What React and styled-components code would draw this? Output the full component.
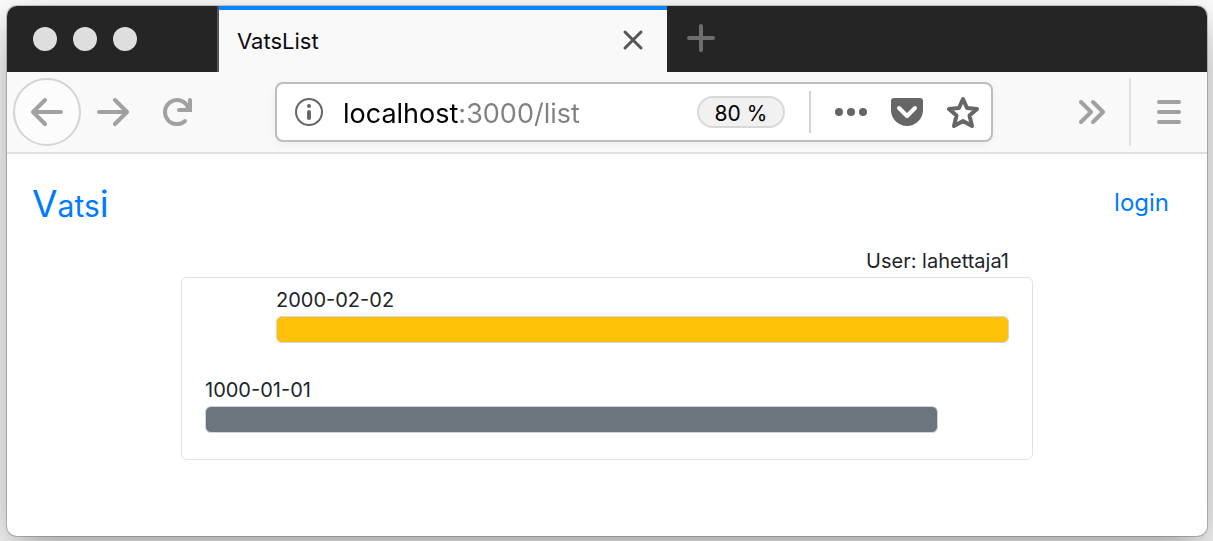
import React, { useState } from "react";
import styled, { createGlobalStyle } from "styled-components";

const GlobalStyle = createGlobalStyle`
  *, *::before, *::after { box-sizing: border-box; }
  body {
    margin: 0;
    background: #fff;
    color: #212529;
    font-family: Inter, "Liberation Sans", sans-serif;
    font-size: 20px;
    line-height: 30px;
  }
  button, input { font: inherit; }
`;

const Desktop = styled.div`
  display: flex;
  min-height: 100vh;
  padding: 6px 6px 5px 7px;
`;

const Window = styled.div`
  flex: 1;
  min-width: 0;
  display: flex;
  flex-direction: column;
  background: #fff;
  border-radius: 10px;
  box-shadow: 0 0 0 1px rgba(0, 0, 0, 0.2), 0 18px 50px rgba(0, 0, 0, 0.38);
`;

const TabBar = styled.div`
  display: flex;
  height: 66px;
  background: #252525;
  border-radius: 10px 10px 0 0;
`;

const WindowControls = styled.div`
  display: flex;
  align-items: center;
  gap: 16px;
  width: 210px;
  padding-left: 26px;
`;

const WindowDot = styled.button`
  width: 24px;
  height: 24px;
  padding: 0;
  border: 0;
  border-radius: 50%;
  background: #dedede;
`;

const Tab = styled.div`
  display: flex;
  align-items: center;
  justify-content: space-between;
  width: 450px;
  padding: 4px 22px 0 18px;
  background: #f9f9f9;
  border-left: 2px solid #555;
  box-shadow: inset 0 4px #0a84ff;
  color: #0c0c0d;
  font-size: 22px;
`;

const IconButton = styled.button`
  display: flex;
  align-items: center;
  justify-content: center;
  flex: none;
  width: ${(p) => p.$width || 32}px;
  height: ${(p) => p.$height || 32}px;
  padding: 0;
  border: 0;
  background: none;
  color: ${(p) => p.$color || "#a1a1a1"};
`;

const NewTab = styled(IconButton)`
  margin: 16px 0 0 18px;
`;

const Toolbar = styled.div`
  display: flex;
  align-items: center;
  height: 82px;
  padding: 0 22px 0 6px;
  background: #f9f9f9;
  border-bottom: 2px solid #e0e0e0;
`;

const NavButtons = styled.div`
  display: flex;
  align-items: center;
  gap: 16px;
  width: 262px;
  flex: none;
`;

const BackButton = styled(IconButton)`
  border: 2px solid #d4d4d4;
  border-radius: 50%;
  background: #fcfcfc;
`;

const UrlBar = styled.div`
  display: flex;
  align-items: center;
  flex: 1;
  min-width: 0;
  height: 60px;
  padding: 0 12px 0 16px;
  background: #fff;
  border: 2px solid #bdbdbd;
  border-radius: 8px;
  box-shadow: 0 2px 8px rgba(0, 0, 0, 0.05);
`;

const UrlInput = styled.input`
  flex: 1;
  min-width: 0;
  height: 40px;
  margin: 0 16px 0 18px;
  padding: 2px 0 0;
  border: 0;
  outline: 0;
  font-size: 27px;
  background: linear-gradient(to right, #000 116px, #808080 116px);
  background-clip: text;
  -webkit-background-clip: text;
  -webkit-text-fill-color: transparent;
`;

const ZoomBadge = styled.button`
  flex: none;
  width: 88px;
  height: 32px;
  padding: 2px 0 0;
  border: 2px solid #d8d8d8;
  border-radius: 16px;
  background: #f1f1f1;
  color: #000;
  font-size: 21px;
  line-height: 28px;
`;

const Divider = styled.span`
  flex: none;
  width: 2px;
  height: ${(p) => p.$height}px;
  margin: ${(p) => p.$margin};
  background: ${(p) => p.$color};
`;

const UrlActions = styled.div`
  display: flex;
  gap: 24px;
`;

const ToolbarEnd = styled.div`
  display: flex;
  align-items: center;
  justify-content: flex-end;
  width: 192px;
  flex: none;
`;

const Page = styled.main`
  padding-bottom: 24px;
`;

const PageHeader = styled.header`
  display: flex;
  align-items: flex-start;
  justify-content: space-between;
  height: 91px;
  padding: 30px 38px 0 25px;
`;

const Brand = styled.a`
  color: #007bff;
  font-size: 37px;
  line-height: 40px;
  text-decoration: none;
`;

const BrandSmall = styled.span`
  font-size: 30px;
`;

const LoginLink = styled.a`
  color: #007bff;
  font-size: 24px;
  line-height: 38px;
  text-decoration: none;
`;

const Content = styled.section`
  width: 71%;
  margin: 0 auto;
`;

const UserLine = styled.p`
  margin: 0;
  padding-right: 24px;
  line-height: 32px;
  text-align: right;
`;

const Board = styled.ul`
  display: flex;
  flex-direction: column;
  gap: 32px;
  margin: 0;
  padding: 7px 23px 26px;
  border: 1px solid #dee2e6;
  border-radius: 6px;
  list-style: none;
`;

const Entry = styled.li`
  margin-left: ${(p) => (p.$side === "right" ? "71px" : "0")};
  margin-right: ${(p) => (p.$side === "left" ? "71px" : "0")};
`;

const Stamp = styled.time`
  display: block;
  margin-bottom: 1px;
`;

const Bar = styled.div`
  height: 27px;
  background: ${(p) => p.$color};
  border: 1px solid #ced4da;
  border-radius: 6px;
`;

const stroke = {
  fill: "none",
  stroke: "currentColor",
  strokeWidth: 4,
  strokeLinecap: "round",
  strokeLinejoin: "round",
};

const entries = [
  { date: "2000-02-02", color: "#ffc107", side: "right" },
  { date: "1000-01-01", color: "#6c757d", side: "left" },
];

export default function App() {
  const [url, setUrl] = useState("localhost:3000/list");
  return (
    <>
      <GlobalStyle />
      <Desktop>
        <Window>
          <TabBar>
            <WindowControls>
              <WindowDot aria-label="Close window" />
              <WindowDot aria-label="Minimize window" />
              <WindowDot aria-label="Zoom window" />
            </WindowControls>
            <Tab>
              <span>VatsList</span>
              <IconButton $width={24} $height={24} $color="#555" aria-label="Close tab">
                <svg width="24" height="24" {...stroke} strokeWidth="3">
                  <path d="M4 3 20 19M20 3 4 19" />
                </svg>
              </IconButton>
            </Tab>
            <NewTab $color="#6e6e6e" aria-label="New tab">
              <svg width="32" height="32" {...stroke}>
                <path d="M16 4V28M4 16H28" />
              </svg>
            </NewTab>
          </TabBar>

          <Toolbar>
            <NavButtons>
              <BackButton $width={68} $height={68} aria-label="Back">
                <svg width="32" height="32" {...stroke}>
                  <path d="M30 16H2M14 4 2 16 14 28" />
                </svg>
              </BackButton>
              <IconButton aria-label="Forward">
                <svg width="32" height="32" {...stroke}>
                  <path d="M2 16H30M18 4 30 16 18 28" />
                </svg>
              </IconButton>
              <IconButton $width={64} aria-label="Reload">
                <svg width="32" height="32" {...stroke}>
                  <path d="M24 25A12 12 0 1 1 26 9.500" />
                  <path d="M29 4V14H18" strokeLinejoin="miter" />
                  <path d="M29 7V14H22Z" fill="currentColor" stroke="none" />
                </svg>
              </IconButton>
            </NavButtons>

            <UrlBar>
              <IconButton $color="#666" aria-label="Site information">
                <svg width="32" height="32" viewBox="0 0 32 32">
                  <circle cx="16" cy="16" r="13" fill="none" stroke="currentColor" strokeWidth="2" />
                  <circle cx="16" cy="10" r="2" fill="currentColor" />
                  <path d="M16 16V22" stroke="currentColor" strokeWidth="4" strokeLinecap="round" />
                </svg>
              </IconButton>
              <UrlInput
                aria-label="Address"
                value={url}
                onChange={(e) => setUrl(e.target.value)}
              />
              <ZoomBadge>80 %</ZoomBadge>
              <Divider $height={42} $margin="0 24px" $color="#d2d2d2" />
              <UrlActions>
                <IconButton $color="#666" aria-label="Page actions">
                  <svg width="32" height="32" fill="currentColor">
                    <circle cx="4" cy="16" r="4" />
                    <circle cx="16" cy="16" r="4" />
                    <circle cx="28" cy="16" r="4" />
                  </svg>
                </IconButton>
                <IconButton $color="#666" aria-label="Save to Pocket">
                  <svg width="32" height="32">
                    <path
                      d="M3 2H29A3 3 0 0 1 32 5V14A16 16 0 0 1 0 14V5A3 3 0 0 1 3 2Z"
                      fill="currentColor"
                    />
                    <path
                      d="M8 12 16 20 24 12"
                      fill="none"
                      stroke="#fff"
                      strokeWidth="4"
                      strokeLinecap="round"
                      strokeLinejoin="round"
                    />
                  </svg>
                </IconButton>
                <IconButton $color="#666" aria-label="Bookmark">
                  <svg width="32" height="32" {...stroke}>
                    <path d="M16 3 20 12 30 13 22.500 19.500 25 30 16 25 7 30 9.500 19.500 2 13 12 12Z" />
                  </svg>
                </IconButton>
              </UrlActions>
            </UrlBar>

            <ToolbarEnd>
              <IconButton aria-label="More tools">
                <svg width="32" height="32" {...stroke}>
                  <path d="M6 6 16 16 6 26M18 6 28 16 18 26" />
                </svg>
              </IconButton>
              <Divider $height={68} $margin="0 22px" $color="#e0e0e0" />
              <IconButton aria-label="Menu">
                <svg width="32" height="32" {...stroke}>
                  <path d="M6 6H26M6 16H26M6 26H26" />
                </svg>
              </IconButton>
            </ToolbarEnd>
          </Toolbar>

          <Page>
            <PageHeader>
              <Brand href="#home">
                V<BrandSmall>ats</BrandSmall>i
              </Brand>
              <LoginLink href="#login">login</LoginLink>
            </PageHeader>
            <Content>
              <UserLine>User: lahettaja1</UserLine>
              <Board>
                {entries.map((e) => (
                  <Entry key={e.date} $side={e.side}>
                    <Stamp dateTime={e.date}>{e.date}</Stamp>
                    <Bar $color={e.color} />
                  </Entry>
                ))}
              </Board>
            </Content>
          </Page>
        </Window>
      </Desktop>
    </>
  );
}
